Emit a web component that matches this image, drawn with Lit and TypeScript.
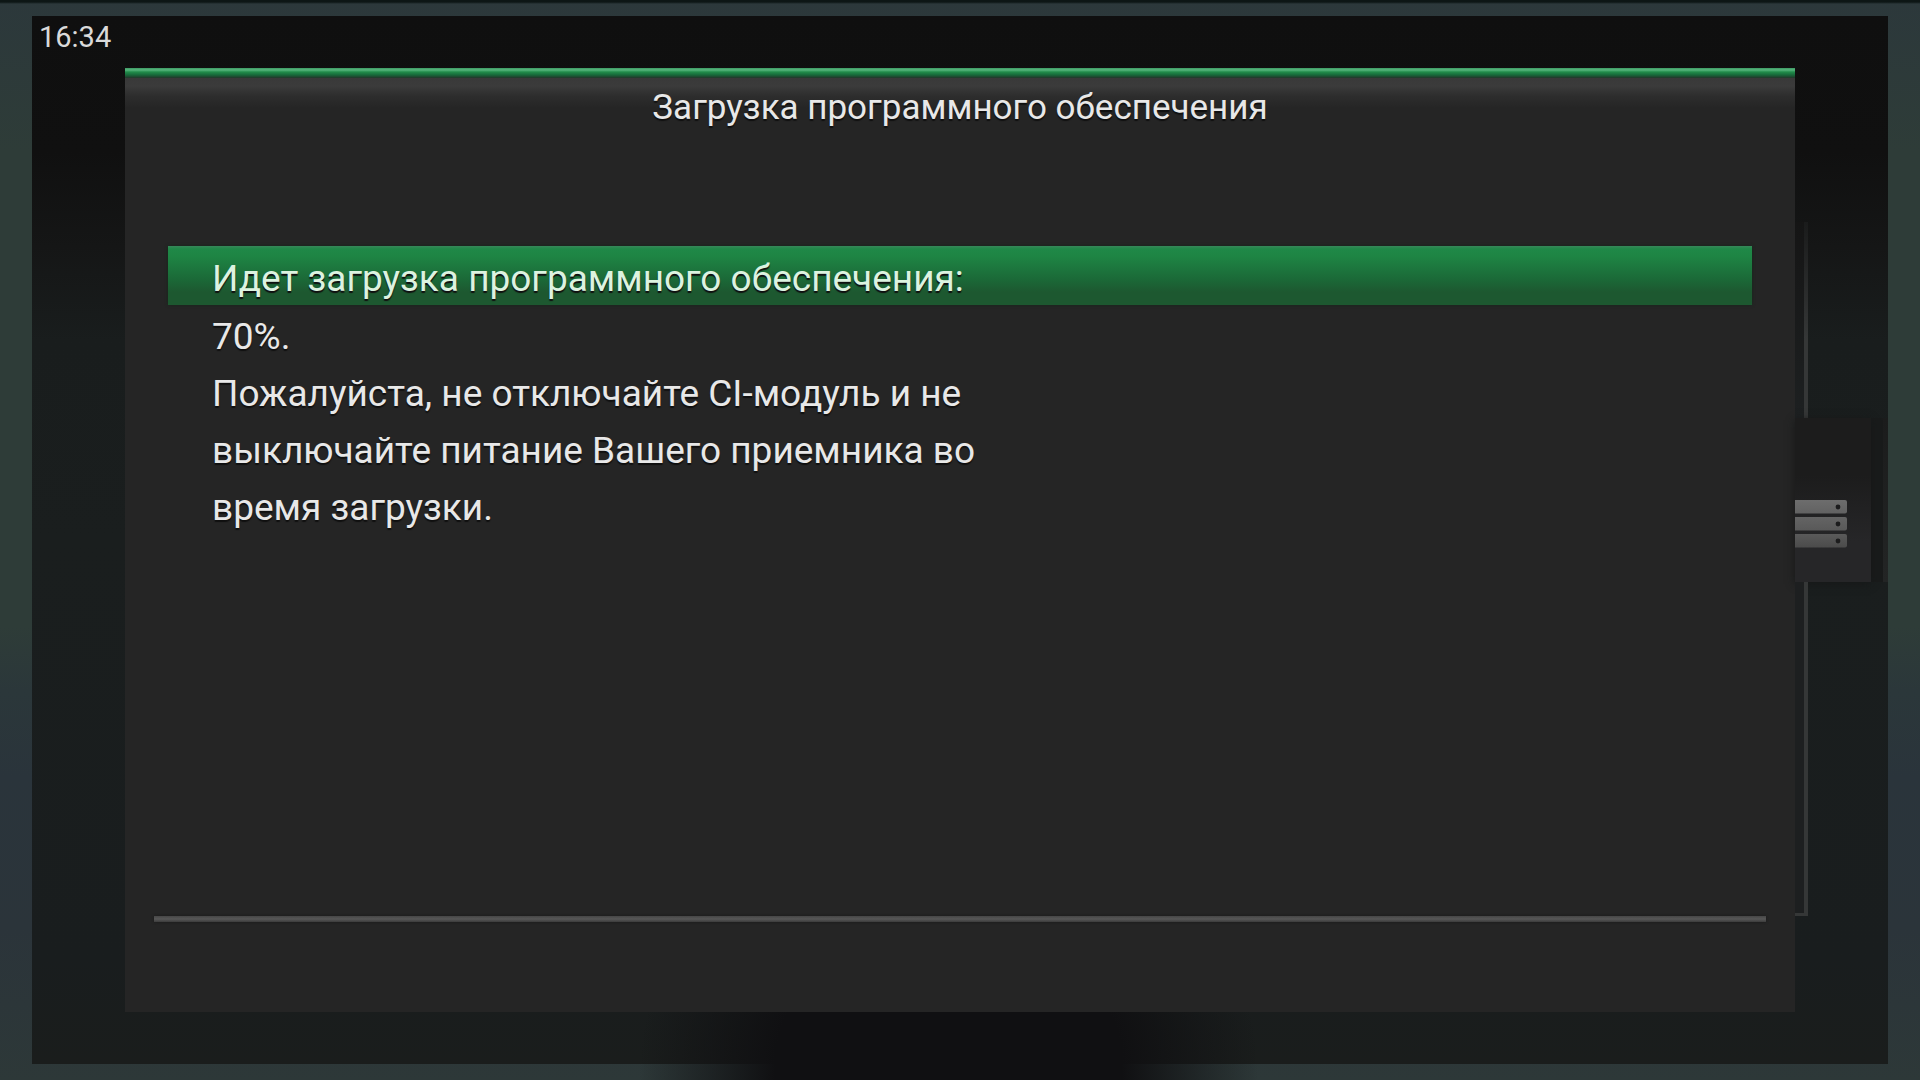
import { LitElement, html, svg, css } from "lit";
import { customElement, property } from "lit/decorators.js";

@customElement("server-icon")
class ServerIcon extends LitElement {
  static styles = css`
    :host { display: block; }
    .icon { display: block; }
  `;
  render() {
    const slab = (y: number, fill: string) => svg`
      <path d="M0 ${y}H50Q52 ${y} 52 ${y + 2}V${y + 11.5}Q52 ${y + 13.5} 50 ${y + 13.5}H0Z" fill=${fill}></path>
      <circle cx="43" cy=${y + 7} r="2.4" fill="#1c1c1d"></circle>`;
    return html`<svg class="icon" width="52" height="48" viewBox="0 0 52 48" aria-hidden="true">
      <defs>
        <linearGradient id="a" x1="0" y1="0" x2="0" y2="1"><stop offset="0" stop-color="#6d6d6d"/><stop offset="1" stop-color="#626262"/></linearGradient>
        <linearGradient id="b" x1="0" y1="0" x2="0" y2="1"><stop offset="0" stop-color="#646464"/><stop offset="1" stop-color="#595959"/></linearGradient>
        <linearGradient id="c" x1="0" y1="0" x2="0" y2="1"><stop offset="0" stop-color="#5a5a5a"/><stop offset="1" stop-color="#4b4b4b"/></linearGradient>
      </defs>
      ${slab(0, "url(#a)")}${slab(17, "url(#b)")}${slab(34, "url(#c)")}
    </svg>`;
  }
}

@customElement("side-rail")
class SideRail extends LitElement {
  static styles = css`
    :host { display: flex; flex-direction: column; padding: 154px 0 96px; box-sizing: border-box; }
    .track { width: 13px; box-sizing: border-box; border-right: 4px solid #353737; background: #1d1f20; }
    .upper { flex: 197; border-image: linear-gradient(#1a1b1b, #353737 60%) 1; background: linear-gradient(#151515, #1d2021); }
    .lower { flex: 332; border-bottom: 3px solid #353737; }
    .tiles { display: flex; justify-content: space-between; height: 164px; background: #191b1b; }
    .tile { width: 76px; box-sizing: border-box; padding-top: 82px; background: linear-gradient(#1c1c1c 35%, #262628 75%); box-shadow: 0 2px 8px #161818; }
    .next { width: 5px; background: linear-gradient(#1b1c1c, #232525); }
  `;
  render() {
    return html`
      <div class="track upper"></div>
      <div class="tiles">
        <div class="tile"><server-icon></server-icon></div>
        <div class="next"></div>
      </div>
      <div class="track lower"></div>`;
  }
}

@customElement("message-dialog")
class MessageDialog extends LitElement {
  @property() heading = "";
  @property({ type: Array }) lines: string[] = [];
  @property({ type: Number }) selected = 0;

  static styles = css`
    :host { display: flex; flex-direction: column; background: #252525; color: #e8e8e8; text-shadow: 0 2px 1px #101010; }
    .edge { height: 10px; background: linear-gradient(#3d9a63 0, #57b57d 20%, #218c4a 40%, #17683a 70%, #23352a 100%); }
    .title { box-sizing: border-box; height: 168px; margin: 0; padding-top: 7px; font-size: 35px; line-height: 46px; font-weight: 400; text-align: center;
      background: linear-gradient(#393939, #3b3b3b 8px, #2d2d2d 18px, #252525 30px); }
    .list { list-style: none; margin: 0 43px; padding: 0; flex: 1; font-size: 37px; line-height: 51px; }
    .line { padding: 6px 44px 0; }
    .line.selected { padding: 7px 44px 1px; color: #dcf3e0; background: linear-gradient(#37875a 0, #1f8847 3px, #1e8544 10px, #1b6837 34px, #1d5830 46px); box-shadow: 0 0 3px #16281c; }
    .rule { height: 6px; margin: 0 29px 90px; border: 0; background: linear-gradient(#464646, #575757 50%, #3c3c3c); box-shadow: 0 0 3px #1a1a1a; }
  `;
  render() {
    return html`
      <div class="edge"></div>
      <h1 class="title">${this.heading}</h1>
      <ul class="list">
        ${this.lines.map((l, i) => html`<li class="line ${i === this.selected ? "selected" : ""}">${l}</li>`)}
      </ul>
      <hr class="rule">`;
  }
}

@customElement("app-root")
class AppRoot extends LitElement {
  static styles = css`
    :host { display: flex; min-height: 100vh; box-sizing: border-box; padding: 16px 32px;
      font-family: Roboto, "Liberation Sans", sans-serif;
      background:
        linear-gradient(#0d1615 2px, transparent 4px),
        radial-gradient(ellipse 310px 240px at 49.4% 100%, #101012 56%, transparent 100%),
        linear-gradient(#2c383b 0, #2e3c38 14%, #2e3c38 58%, #2b373a 64%, #2a343b 72%, #2b343a 86%, #2d3838 100%); }
    .screen { flex: 1; display: grid; grid-template-columns: 93px 1fr 93px; grid-template-rows: 52px 1fr 52px;
      background:
        radial-gradient(ellipse 310px 240px at 49.4% 100%, #101012 56%, transparent 100%),
        linear-gradient(#0f0f0f 0, #101010 13%, #151616 22%, #191d1d 31%, #1a1e1e 50%, #191d1e 90%, #1a1d1c 100%); }
    .clock { grid-column: 1 / -1; padding-left: 7px; font-size: 29px; line-height: 42px; color: #dadada; }
    .dialog { grid-column: 2; grid-row: 2; }
    .rail { grid-column: 3; grid-row: 2; }
  `;
  lines = [
    "Идет загрузка программного обеспечения:",
    "70%.",
    "Пожалуйста, не отключайте CI-модуль и не",
    "выключайте питание Вашего приемника во",
    "время загрузки.",
  ];
  render() {
    return html`
      <main class="screen">
        <time class="clock">16:34</time>
        <message-dialog class="dialog" role="dialog" heading="Загрузка программного обеспечения" .lines=${this.lines}></message-dialog>
        <side-rail class="rail"></side-rail>
      </main>`;
  }
}
